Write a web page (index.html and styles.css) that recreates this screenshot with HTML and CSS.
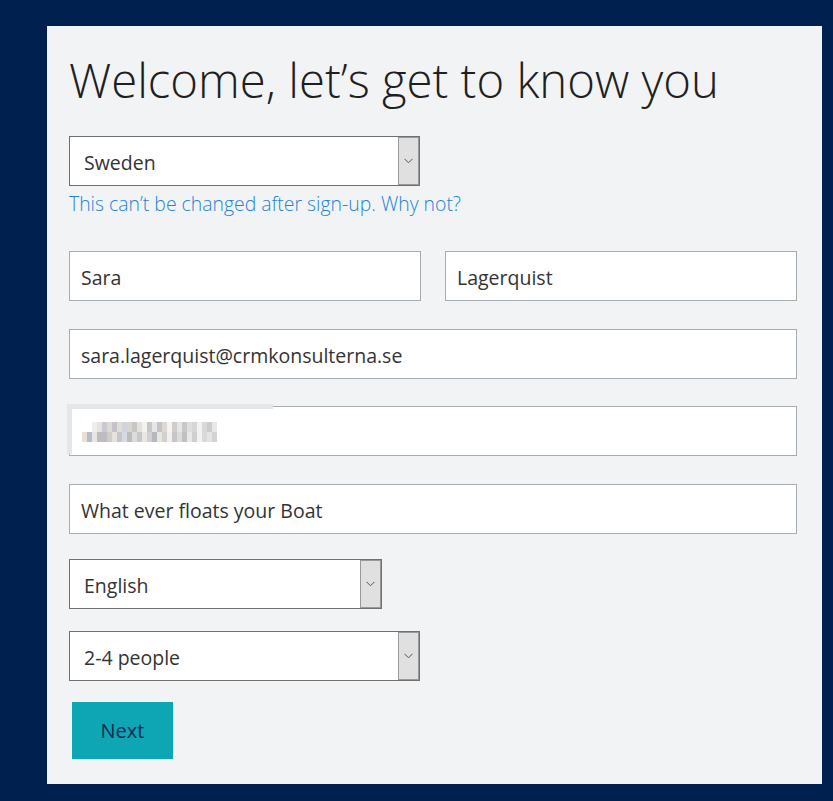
FILE: index.html
```html
<!DOCTYPE html>
<html lang="en">
<head>
    <meta charset="UTF-8">
    <meta name="viewport" content="width=device-width, initial-scale=1.0">
    <title>Welcome, let's get to know you</title>
    <link rel="stylesheet" href="styles.css">
</head>
<body>
    <div class="panel">
        <h1 class="title">Welcome, let’s get to know you</h1>

        <div class="select select-country">
            <span class="select-value">Sweden</span>
            <span class="select-btn">
                <svg width="9" height="6" viewBox="0 0 9 6"><path d="M0.5 0.8 L4.5 4.8 L8.5 0.8" fill="none" stroke="#555" stroke-width="1"/></svg>
            </span>
        </div>
        <a class="hint" href="#">This can’t be changed after sign-up. Why not?</a>

        <div class="row row-names">
            <div class="input input-half">Sara</div>
            <div class="input input-half">Lagerquist</div>
        </div>
        <div class="input row-email">sara.lagerquist@crmkonsulterna.se</div>
        <div class="input input-phone row-phone">
            <div class="mosaic"></div>
        </div>
        <div class="input row-company">What ever floats your Boat</div>

        <div class="select select-language">
            <span class="select-value">English</span>
            <span class="select-btn">
                <svg width="9" height="6" viewBox="0 0 9 6"><path d="M0.5 0.8 L4.5 4.8 L8.5 0.8" fill="none" stroke="#555" stroke-width="1"/></svg>
            </span>
        </div>
        <div class="select select-size">
            <span class="select-value">2-4 people</span>
            <span class="select-btn">
                <svg width="9" height="6" viewBox="0 0 9 6"><path d="M0.5 0.8 L4.5 4.8 L8.5 0.8" fill="none" stroke="#555" stroke-width="1"/></svg>
            </span>
        </div>

        <button class="btn-next">Next</button>
    </div>
</body>
</html>
```

FILE: styles.css
```css
html, body {
    margin: 0;
    height: 100%;
    background: #002050;
    font-family: "Open Sans", "Noto Sans", sans-serif;
    overflow: hidden;
}
.panel {
    box-sizing: border-box;
    margin: 26px 0 0 47px;
    width: 775px;
    height: 758px;
    padding: 0 25px 0 22px;
    background: #f2f3f5;
    display: flex;
    flex-direction: column;
    align-items: flex-start;
}
.title {
    margin: 25px 0 0 0;
    height: 58px;
    font-size: 47.3px;
    font-weight: 300;
    line-height: 58px;
    color: #1f1f1f;
    white-space: nowrap;
}
.select {
    box-sizing: border-box;
    height: 50px;
    border: 1px solid #707070;
    background: #fff;
    display: flex;
    align-items: stretch;
}
.select-value {
    flex: 1;
    display: flex;
    align-items: center;
    padding: 2px 0 0 14px;
    font-size: 19.5px;
    color: #333;
}
.select-btn {
    box-sizing: border-box;
    width: 21px;
    background: #e0e0e0;
    border: 1px solid #999;
    display: flex;
    align-items: center;
    justify-content: center;
}
.select-country {
    width: 351px;
    margin-top: 27px;
}
.select-language {
    width: 313px;
    margin-top: 25px;
}
.select-size {
    width: 351px;
    margin-top: 22px;
}
.hint {
    margin-top: 4px;
    font-size: 19.4px;
    font-weight: 300;
    line-height: 27px;
    color: #2484d6;
    text-decoration: none;
    white-space: nowrap;
}
.row {
    display: flex;
    gap: 24px;
    width: 728px;
}
.row-names {
    margin-top: 34px;
}
.input-half {
    width: 352px;
}
.input {
    box-sizing: border-box;
    width: 728px;
    height: 50px;
    border: 1px solid #a6adb1;
    background: #fff;
    display: flex;
    align-items: center;
    padding: 2px 0 0 11px;
    font-size: 19.5px;
    color: #333;
}
.row-email {
    margin-top: 28px;
}
.row-phone {
    margin-top: 27px;
    position: relative;
}
.input-phone::before {
    content: '';
    position: absolute;
    left: -3px;
    top: -3px;
    width: 206px;
    height: 50px;
    box-sizing: border-box;
    border-top: 5px solid #e4e6e8;
    border-left: 5px solid #e4e6e8;
}
.mosaic {
    width: 135px;
    height: 20px;
    margin-left: 1px;
    background:
        linear-gradient(90deg,
            transparent 0 10px, #f0ece8 10px 15px, #e6e2de 15px 20px, #c9c9cf 20px 25px, #ddd9d5 25px 30px, #c4c4c8 30px 35px,
            #e0dcd8 35px 40px, #cfd3da 40px 45px, #d8d4d0 45px 50px, #c6c6c6 50px 55px, #e4e0dc 55px 60px,
            #f4f2ee 60px 65px, #c8c6c4 65px 70px, #e6e6ea 70px 75px, #c4c4c4 75px 80px, #dcd8d4 80px 85px,
            #f6f4f2 85px 90px, #d0cccc 90px 95px, #e6e6e6 95px 100px, #c8c8cc 100px 105px, #e0dedc 105px 110px,
            #d6d6d6 110px 115px, #f2f2ee 115px 120px, #d8d8d8 120px 125px, #cccccc 125px 130px, #e8e8e8 130px 135px) top / 100% 10px no-repeat,
        linear-gradient(90deg,
            #eadfd4 0 5px, #b8bcc6 5px 10px, #e6e6e6 10px 15px, #c2bcb6 15px 20px, #bcbcc6 20px 25px,
            #d2ccc6 25px 30px, #e6e2de 30px 35px, #c6c6ca 35px 40px, #d6dae2 40px 45px, #bcbcbc 45px 50px,
            #dcdcdc 50px 55px, #c8c8c8 55px 60px, #ece6e0 60px 65px, #d0d0d4 65px 70px, #b8b8b8 70px 75px,
            #e6e6e6 75px 80px, #d6d0ca 80px 85px, #f0f0f4 85px 90px, #c6c6c6 90px 95px, #dcdcdc 95px 100px,
            #c0c0c4 100px 105px, #e8e8e8 105px 110px, #cfcfcf 110px 115px, #f2f2f2 115px 120px, #dadada 120px 125px,
            #e4e4e4 125px 130px, #d4d4d4 130px 135px) bottom / 100% 10px no-repeat;
}
.row-company {
    margin-top: 28px;
}
.btn-next {
    margin: 21px 0 0 3px;
    width: 101px;
    height: 57px;
    border: none;
    background: #0ea5b5;
    color: #0b2b50;
    font-family: "Open Sans", "Noto Sans", sans-serif;
    font-size: 20px;
    padding: 0;
}
```
